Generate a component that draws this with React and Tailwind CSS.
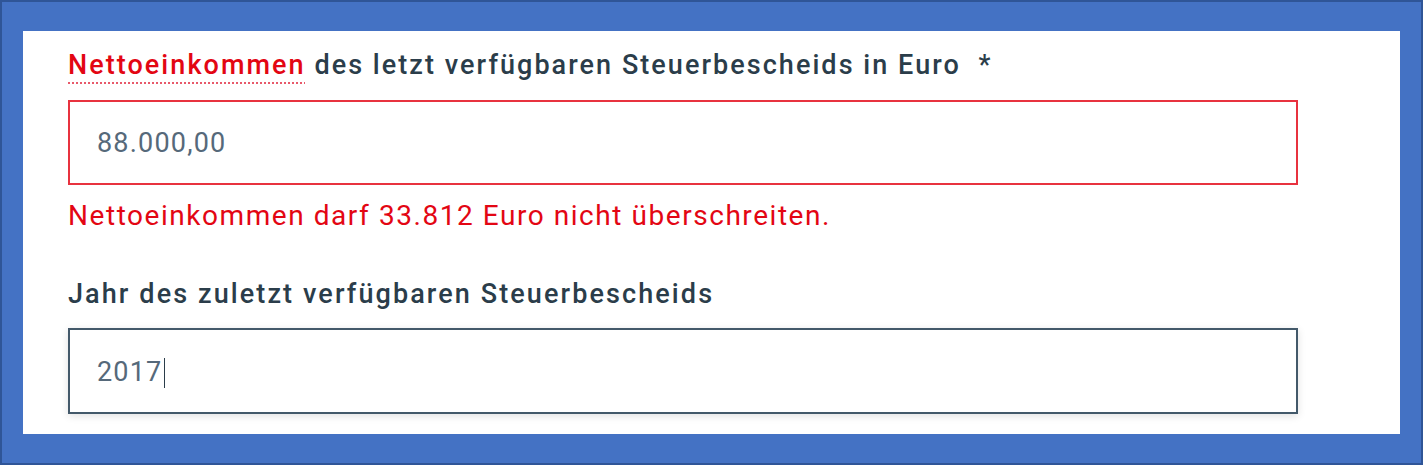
import React from "react";

const font = { fontFamily: "Roboto, 'Noto Sans', sans-serif" };

export default function App() {
  return (
    <div
      className="w-[1423px] h-[465px] bg-[#4472c4] border-2 border-[#2f5597] pt-[29px] pb-[29px] px-[21px]"
      style={font}
    >
      <div className="h-full bg-white pl-[45px] pt-[16px]">
        <label className="block text-[27px] leading-[36px] font-medium text-[#2b3d4a] tracking-[2.05px]">
          <span className="text-[#e30613] underline decoration-dotted decoration-[#e8596a] decoration-[2px] underline-offset-[8px]">
            Nettoeinkommen
          </span>{" "}
          des letzt verfügbaren Steuerbescheids in Euro&nbsp;&nbsp;*
        </label>
        <div className="mt-[17px] w-[1230px] h-[85px] border-2 border-[#e8323f] flex items-center pl-[27px]">
          <span className="text-[27px] text-[#56697a] pt-[2px] tracking-[1.2px]">88.000,00</span>
        </div>
        <p className="mt-[13px] text-[28px] leading-[36px] text-[#e30613] tracking-[1.55px]">
          Nettoeinkommen darf 33.812 Euro nicht überschreiten.
        </p>
        <label className="block mt-[42px] text-[27px] leading-[36px] font-medium text-[#2b3d4a] tracking-[2.1px]">
          Jahr des zuletzt verfügbaren Steuerbescheids
        </label>
        <div className="mt-[16px] w-[1230px] h-[86px] border-2 border-[#43596a] shadow-[0_2px_8px_rgba(0,0,0,0.12)] flex items-center pl-[27px]">
          <span className="text-[27px] text-[#56697a] pt-[2px] tracking-[1.2px]">2017</span>
          <span className="w-[1px] h-[30px] bg-[#2b3d4a] ml-[1px] mt-[4px]"></span>
        </div>
      </div>
    </div>
  );
}
